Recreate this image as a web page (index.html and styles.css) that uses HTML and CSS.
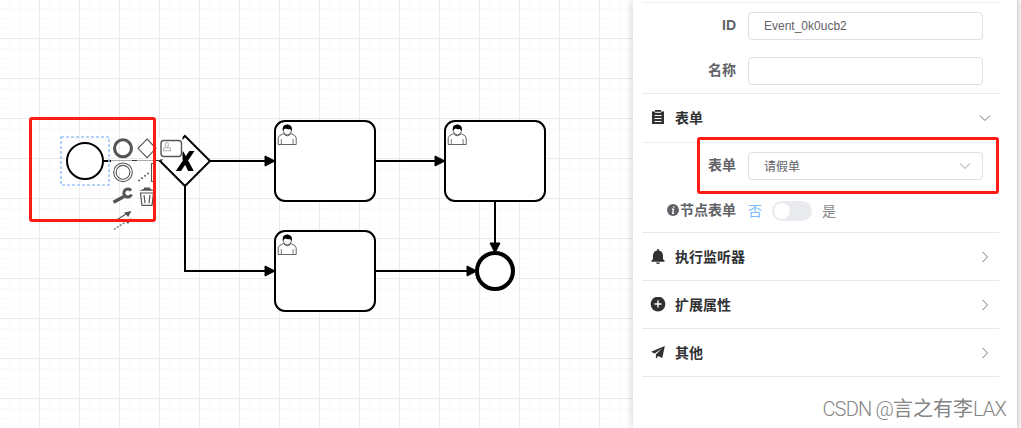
FILE: index.html
```
<!DOCTYPE html>
<html lang="zh-CN">
<head>
    <meta charset="UTF-8">
    <meta name="viewport" content="width=device-width, initial-scale=1.0">
    <title>流程设计</title>
    <link rel="stylesheet" href="styles.css">
</head>
<body>
    <div class="designer">
        <div class="canvas">
            <svg class="diagram" width="633" height="428" viewBox="0 0 633 428">
                <defs>
                    <marker id="arrow" viewBox="0 0 20 20" refX="11" refY="10" markerWidth="10" markerHeight="10" orient="auto">
                        <path d="M1 5 L11 10 L1 15 Z" stroke="#000" stroke-width="1"/>
                    </marker>
                    <g id="user">
                        <path d="M3.2 21.5 V14.8 Q3.4 12.4 8.6 10.6 Q12.3 14.6 16 10.6 Q21 12.4 21.2 14.8 V21.5 Z" fill="#fff" stroke="#222" stroke-width=".7"/>
                        <path d="M6.3 21 V16 M18.1 21 V16" stroke="#222" stroke-width=".6"/>
                        <path d="M9.7 9.5 V11.6 Q12.3 14.2 14.9 11.6 V9.5" fill="#fff" stroke="#222" stroke-width=".6"/>
                        <ellipse cx="12.3" cy="7" rx="4.1" ry="4.8" fill="#fff" stroke="#222" stroke-width=".7"/>
                        <path d="M7.800 7.800 Q6.900 1.400 12.200 1.400 Q17.800 1.500 16.800 7.900 Q15.900 6.200 14.500 5.900 Q12.700 6.700 10.800 5.600 Q8.700 6 7.800 7.800Z" fill="#000"/>
                    </g>
                </defs>

                <!-- sequence flows -->
                <g class="flow">
                    <path d="M103 161 H111"/>
                    <path d="M210 161 H275" marker-end="url(#arrow)"/>
                    <path d="M185 186 V271 H275" marker-end="url(#arrow)"/>
                    <path d="M375 161 H445" marker-end="url(#arrow)"/>
                    <path d="M375 271 H477" marker-end="url(#arrow)"/>
                    <path d="M495 201 V253" marker-end="url(#arrow)"/>
                </g>

                <!-- shapes -->
                <g class="shape">
                    <circle cx="85" cy="161" r="18"/>
                    <path d="M185 136 L210 161 L185 186 L160 161 Z"/>
                    <rect x="275" y="121" width="100" height="80" rx="10"/>
                    <rect x="445" y="121" width="100" height="80" rx="10"/>
                    <rect x="275" y="231" width="100" height="80" rx="10"/>
                    <circle class="end" cx="495" cy="271" r="18"/>
                </g>
                <path d="M175.800 171 H181 L194.500 151 H189.300 Z"/>
                <path d="M178.500 151.500 H183.300 L193.800 171 H188.200 Z"/>
                <use href="#user" x="275" y="123"/>
                <use href="#user" x="445" y="123"/>
                <use href="#user" x="275" y="233"/>
                <rect class="outline" x="61" y="137" width="48" height="48"/>

                <!-- context pad -->
                <rect x="159" y="137" width="23.500" height="22.500" fill="#fff"/>
                <path d="M111 160.500 H161" stroke="#aaa"/>
                <path d="M132 160.500 H137 M156 160.500 H161" stroke="#333"/>
                <g class="pad">
                    <circle cx="123" cy="148.300" r="8.500" stroke-width="3.100"/>
                    <path d="M147 139 L156 148.300 L147 157.600 L138 148.300 Z"/>
                    <rect x="161" y="140.500" width="20.500" height="16" rx="3" stroke-width="1.400" fill="#fff"/>
                    <path d="M163.500 150.800 V148.300 L166 146.600 Q164 142.700 166.800 142.600 Q169.600 142.700 167.600 146.600 L170.500 148.300 V150.800 Z M165.500 148 H168.500" stroke-width=".7" stroke="#888"/>
                    <circle cx="123" cy="172.300" r="9.300"/>
                    <circle cx="123" cy="172.300" r="6.900"/>
                    <path d="M155.500 163.500 H151.500 V181.500 H155.500"/>
                    <path d="M139 180.500 L150 172" stroke-width="1.900" stroke-linecap="round" stroke-dasharray=".1 3.700"/>
                    <path d="M113.500 202.300 L124 196.400" stroke-width="3.400"/>
                    <path d="M131 190.600 A4 4 0 1 0 131.500 194.500" stroke-width="3"/>
                    <path d="M140.500 193 H153.500 L152 205.300 H142 Z M144 195 L145 203.300 M150 195 L149 203.300" stroke-width="1.200"/>
                    <path d="M139 190.700 L144 188.700 V187.600 H150 V188.700 L155 190.700 Z" fill="#555" stroke="none"/>
                    <path d="M114 221.800 L126 214"/>
                    <path d="M114 229.500 L127 221" stroke-dasharray="2 1.500"/>
                    <path d="M131.500 211 L124 212.500 L128.200 217 Z M131.500 218.400 L124.500 220 L128 224 Z" fill="#555" stroke="none"/>
                </g>
            </svg>
            <div class="mark mark-start"></div>
        </div>

        <div class="panel">
            <div class="section">
                <div class="form-item">
                    <label class="label">ID</label>
                    <div class="input">Event_0k0ucb2</div>
                </div>
                <div class="form-item">
                    <label class="label">名称</label>
                    <div class="input"></div>
                </div>
            </div>

            <div class="header">
                <svg class="icon" viewBox="0 0 16 16"><path d="M2 1.500 H5 V0 H11 V1.500 H14 V14 H2 Z"/><path d="M5 2.300 H11 M4.500 5.500 H11.500 M4.500 8.500 H11.500 M4.500 11.500 H11.500" stroke="#fff" stroke-width="1"/></svg>
                <span class="title">表单</span>
                <svg class="arrow" viewBox="0 0 12 12"><path d="M1 3.500 L6 8.500 L11 3.500"/></svg>
            </div>
            <div class="section section-form">
                <div class="form-item">
                    <label class="label">表单</label>
                    <div class="input select">
                        <span class="value">请假单</span>
                        <svg class="arrow" viewBox="0 0 12 12"><path d="M1 3.500 L6 8.500 L11 3.500"/></svg>
                    </div>
                </div>
                <div class="form-item">
                    <label class="label">
                        <svg class="info" viewBox="0 0 12 12"><circle cx="6" cy="6" r="6"/><path d="M6.900 2.300 L6.700 3.700 M5 5.200 H6.400 L5.700 9.300 H7" fill="none" stroke="#fff" stroke-width="1.300"/></svg>节点表单
                    </label>
                    <span class="switch-text active">否</span>
                    <span class="switch"></span>
                    <span class="switch-text">是</span>
                </div>
            </div>

            <div class="header">
                <svg class="icon" viewBox="0 0 16 16"><path d="M7.200 0 H8.800 V1.600 Q12.700 2.200 13 6.500 V10 L14.600 11.800 V12.700 H1.400 V11.800 L3 10 V6.500 Q3.300 2.200 7.200 1.600 Z M6 13.500 H10 Q9.600 15 8 15 Q6.400 15 6 13.500 Z"/></svg>
                <span class="title">执行监听器</span>
                <svg class="arrow" viewBox="0 0 12 12"><path d="M3.500 1 L8.500 6 L3.500 11"/></svg>
            </div>
            <div class="header">
                <svg class="icon" viewBox="0 0 16 16"><circle cx="8" cy="7" r="7.400"/><path d="M4.500 7 H11.500 M8 3.500 V10.500" stroke="#fff" stroke-width="1.400"/></svg>
                <span class="title">扩展属性</span>
                <svg class="arrow" viewBox="0 0 12 12"><path d="M3.500 1 L8.500 6 L3.500 11"/></svg>
            </div>
            <div class="header">
                <svg class="icon" viewBox="0 0 16 16"><path d="M14.800 1 L1 6.700 L4.700 8.400 L12 3.600 L5.900 9.400 V14 L8.100 11 L12.300 13 Z"/></svg>
                <span class="title">其他</span>
                <svg class="arrow" viewBox="0 0 12 12"><path d="M3.500 1 L8.500 6 L3.500 11"/></svg>
            </div>
            <div class="mark mark-form"></div>
        </div>
        <div class="watermark">CSDN @<span class="author">言之有李</span>LAX</div>
    </div>
</body>
</html>
```
FILE: styles.css
```
body {
    margin: 0;
    font-family: "Liberation Sans", "Noto Sans CJK SC", sans-serif;
    font-size: 14px;
    color: #303133;
    background-color: #fafafa;
}

.designer {
    position: relative;
    display: flex;
    height: 428px;
    overflow: hidden;
}

.canvas {
    position: relative;
    width: 633px;
    height: 428px;
    background-color: #fff;
    background-image:
        linear-gradient(90deg, #ebebeb 1px, transparent 1px),
        linear-gradient(#ebebeb 1px, transparent 1px),
        linear-gradient(90deg, #fafafa 1px, transparent 1px),
        linear-gradient(#fafafa 1px, transparent 1px);
    background-size: 40px 40px, 40px 40px, 10px 10px, 10px 10px;
    background-position: 39px 38px, 39px 38px, 9px 8px, 9px 8px;
}

.diagram {
    display: block;
}

.flow path {
    fill: none;
    stroke: #000;
    stroke-width: 2;
}

.shape > * {
    fill: #fff;
    stroke: #000;
    stroke-width: 2;
}

.shape .end {
    stroke-width: 4;
}

.outline {
    fill: none;
    stroke: #a3c3fb;
    stroke-width: 1.6;
    stroke-dasharray: 3 2;
}

.pad {
    fill: none;
    stroke: #555;
    stroke-width: 1.1;
}

/* red frames over the page */
.mark {
    position: absolute;
    box-sizing: border-box;
    border: 3px solid #fe1c12;
    border-radius: 3px;
}

.mark-start {
    left: 29px;
    top: 117px;
    width: 127px;
    height: 105px;
}

.mark-form {
    left: 64px;
    top: 137px;
    width: 302px;
    height: 57px;
}

.panel {
    position: relative;
    box-sizing: border-box;
    width: 385px;
    padding: 2px 18px 0 9px;
    background-color: #fff;
    border-right: 1px solid #d4d4d4;
    box-shadow: 0 0 8px rgba(0, 0, 0, 0.2);
}

.section {
    box-sizing: border-box;
    height: 91px;
    padding-top: 9px;
    border-top: 1px solid #ebeef5;
}

.section-form {
    height: 90px;
}

.form-item {
    display: flex;
    align-items: center;
    height: 28px;
    margin-bottom: 17px;
}

.label {
    display: flex;
    align-items: center;
    justify-content: flex-end;
    width: 94px;
    margin-right: 12px;
    line-height: 26px;
    padding-bottom: 2px;
    font-weight: bold;
    color: #606266;
}

.input {
    display: flex;
    align-items: center;
    justify-content: space-between;
    box-sizing: border-box;
    width: 235px;
    height: 28px;
    padding: 0 11px 0 15px;
    border: 1px solid #dcdfe6;
    border-radius: 4px;
    font-size: 12px;
    color: #606266;
}

.value {
    padding-bottom: 2px;
}

.arrow {
    width: 12px;
    height: 12px;
    fill: none;
    stroke: #606266;
    stroke-width: 0.9;
}

.select .arrow {
    stroke: #c0c4cc;
    stroke-width: 1.1;
}

.info {
    width: 12px;
    height: 12px;
    margin-right: 1px;
    fill: #606266;
}

.switch {
    box-sizing: border-box;
    width: 40px;
    height: 20px;
    margin: 0 10px;
    border-radius: 10px;
    background-color: #e9eaee;
}

.switch::before {
    content: "";
    display: block;
    width: 16px;
    height: 16px;
    margin: 2px;
    border-radius: 50%;
    background-color: #fff;
}

.switch-text {
    padding-bottom: 2px;
    color: #8a8a8a;
}

.switch-text.active {
    color: #79bbff;
}

.header {
    display: flex;
    align-items: center;
    box-sizing: border-box;
    height: 48px;
    padding: 0 8px 0 8px;
    border-top: 1px solid #e6e8f3;
}

.section + .header {
    height: 49px;
}

.section-form + .header {
    height: 48px;
}

.header:nth-last-child(2) {
    height: 49px;
    border-bottom: 1px solid #e6e8f3;
}

.icon {
    width: 16px;
    height: 16px;
    fill: #303133;
}

.title {
    flex: 1;
    margin-left: 9px;
    padding-bottom: 2px;
    font-weight: bold;
}

.watermark {
    position: absolute;
    right: 15px;
    bottom: 4px;
    font-family: Roboto, "Noto Sans CJK SC", sans-serif;
    font-size: 20px;
    font-weight: 300;
    line-height: 30px;
    letter-spacing: -0.8px;
    color: #858585;
    text-shadow: 1px 1px 0 #fff;
}

.author {
    font-weight: 400;
    letter-spacing: 0;
}
```
